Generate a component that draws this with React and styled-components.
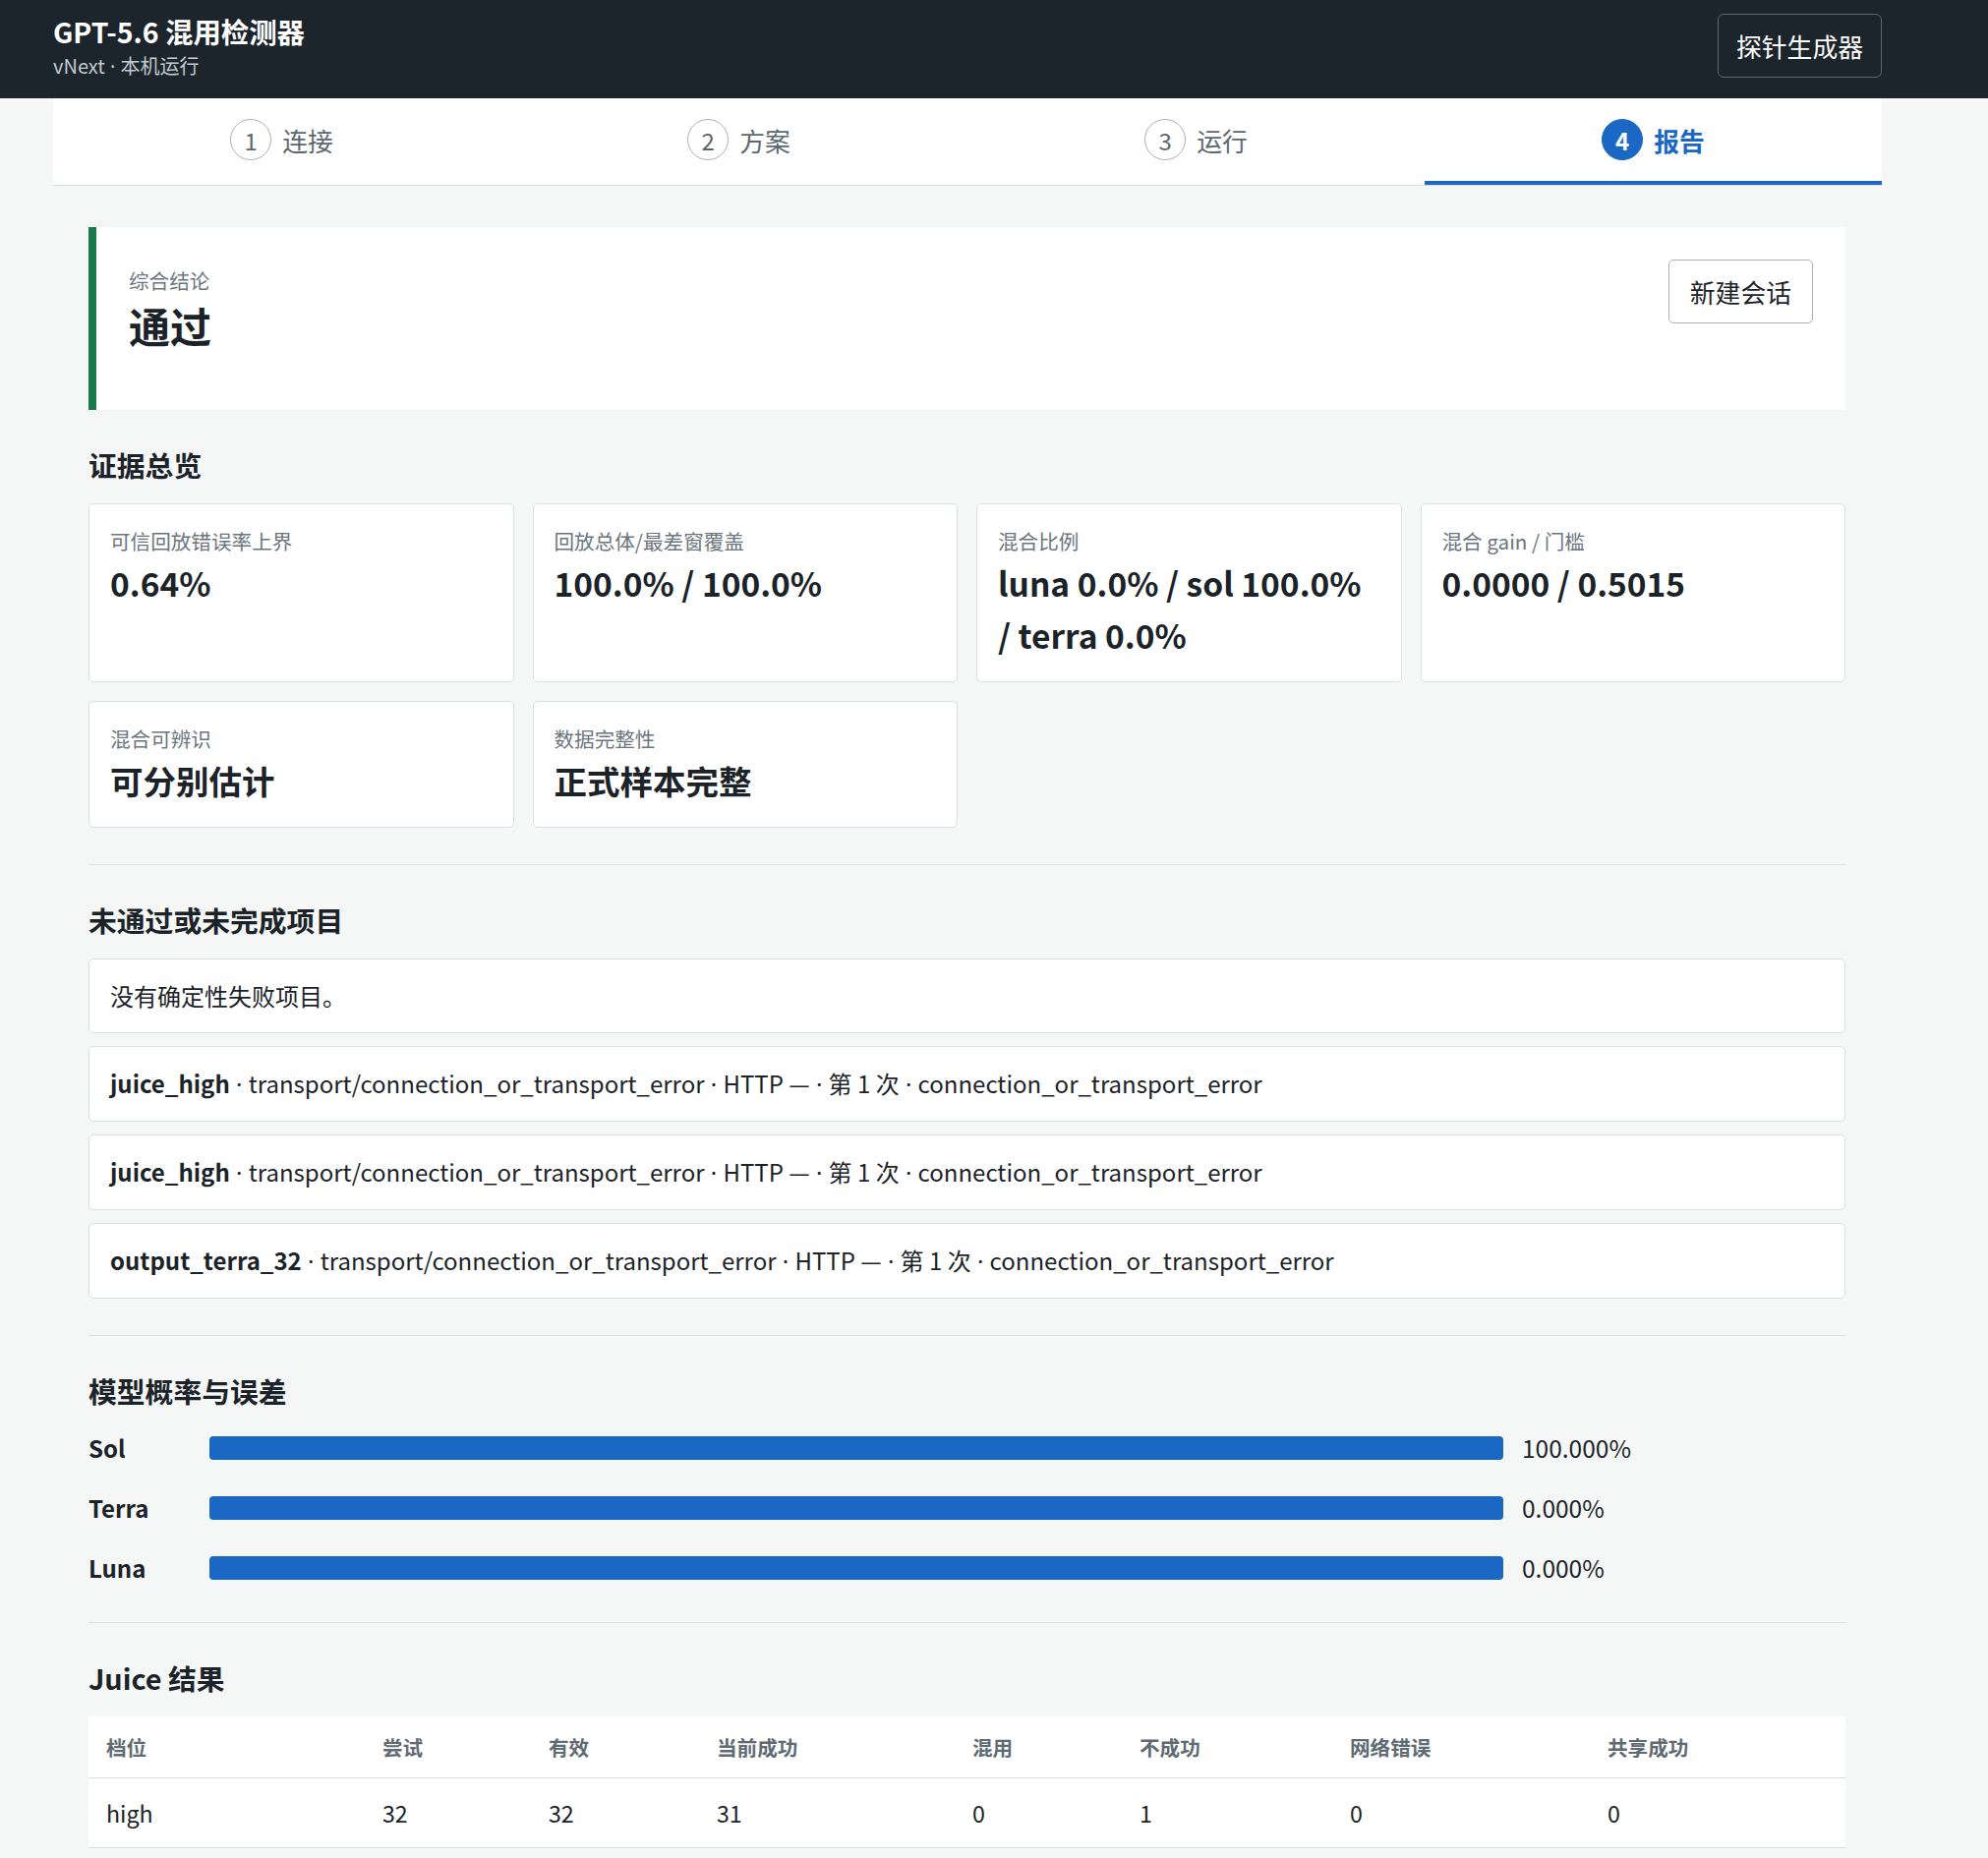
import React from 'react'
import styled, { createGlobalStyle } from 'styled-components'

const GlobalStyle = createGlobalStyle`
  * { box-sizing: border-box; }
  body {
    margin: 0;
    background: #f5f7f7;
    color: #1b2329;
    font-family: "Noto Sans CJK SC", "Noto Sans", sans-serif;
  }
`

const TopBar = styled.header`
  background: #1b252b;
  height: 100px;
`

const TopInner = styled.div`
  width: 1860px;
  margin-left: 54px;
  padding-top: 13px;
  display: flex;
  justify-content: space-between;
  align-items: flex-start;
`

const Brand = styled.div`
  display: flex;
  flex-direction: column;
`

const BrandTitle = styled.div`
  color: #ffffff;
  font-size: 28.4px;
  font-weight: 700;
  line-height: 37px;
`

const BrandSub = styled.div`
  color: #c3cacf;
  font-size: 20px;
  line-height: 34px;
`

const Dot = styled.span`
  font-family: "Noto Sans", sans-serif;
  white-space: pre;
`

const GhostButton = styled.button`
  height: 65px;
  margin-top: 1px;
  padding: 0 18px;
  background: transparent;
  color: #ffffff;
  border: 1px solid #5a656c;
  border-radius: 6px;
  font-family: inherit;
  font-size: 25.8px;
`

const Shell = styled.div`
  width: 1860px;
  margin-left: 54px;
`

const Steps = styled.nav`
  display: grid;
  grid-template-columns: repeat(4, 1fr);
  background: #ffffff;
  border-bottom: 1px solid #d8dde1;
`

const Step = styled.div`
  height: 88px;
  display: flex;
  align-items: center;
  justify-content: center;
  gap: 11px;
  border-bottom: 4px solid ${p => (p.$active ? '#1a68c4' : 'transparent')};
  color: ${p => (p.$active ? '#1a68c4' : '#5c676f')};
  font-size: 25.8px;
  font-weight: ${p => (p.$active ? 700 : 400)};
`

const StepNum = styled.span`
  width: 42px;
  height: 42px;
  border-radius: 50%;
  display: flex;
  align-items: center;
  justify-content: center;
  font-size: 24px;
  border: 1.3px solid ${p => (p.$active ? '#1a68c4' : '#a9b1b7')};
  background: ${p => (p.$active ? '#1a68c4' : '#ffffff')};
  color: ${p => (p.$active ? '#ffffff' : '#5c676f')};
  font-weight: ${p => (p.$active ? 700 : 400)};
`

const Main = styled.main`
  padding: 42px 37px 0 36px;
`

const Verdict = styled.section`
  min-height: 186px;
  background: #ffffff;
  border-left: 8px solid #1b7a4c;
  padding: 33px;
  display: flex;
  justify-content: space-between;
  align-items: flex-start;
`

const VerdictLabel = styled.div`
  margin-top: 6px;
  font-size: 20.6px;
  line-height: 31px;
  color: #6b767e;
`

const VerdictValue = styled.div`
  margin-top: 3px;
  font-size: 42px;
  line-height: 54px;
  font-weight: 700;
`

const OutlineButton = styled.button`
  height: 65px;
  padding: 0 21px;
  background: #ffffff;
  color: #1b2329;
  border: 1px solid #a9b1b6;
  border-radius: 5px;
  font-family: inherit;
  font-size: 25.8px;
`

const Section = styled.section`
  padding: 36px 0 37px;
  border-bottom: ${p => (p.$last ? 'none' : '1px solid #dde1e4')};
`

const Heading = styled.h2`
  margin: 0 0 19px;
  font-size: 28.8px;
  line-height: 40px;
  font-weight: 700;
`

const Metrics = styled.div`
  display: grid;
  grid-template-columns: repeat(4, 1fr);
  gap: 19px;
  align-items: stretch;
`

const Metric = styled.div`
  background: #ffffff;
  border: 1px solid #dadfe3;
  border-radius: 5px;
  padding: 21px;
`

const MetricLabel = styled.div`
  font-size: 20.6px;
  line-height: 32px;
  color: #6b767e;
`

const MetricValue = styled.div`
  font-size: 33.5px;
  line-height: 53px;
  font-weight: 700;
`

const Issues = styled.div`
  display: flex;
  flex-direction: column;
  gap: 13px;
`

const Issue = styled.div`
  background: #ffffff;
  border: 1px solid #dadfe3;
  border-radius: 5px;
  padding: 18px 21px;
  font-size: 24px;
  line-height: 38px;
`

const Bars = styled.div`
  display: grid;
  grid-template-columns: 104px 1fr 329px;
  column-gap: 19px;
  row-gap: 25px;
  align-items: center;
  padding-top: 1px;
`

const BarName = styled.div`
  font-size: 24px;
  line-height: 36px;
  font-weight: 700;
`

const BarTrack = styled.div`
  height: 24px;
  border-radius: 4px;
  background: #1a68c4;
`

const BarValue = styled.div`
  font-size: 24.5px;
  line-height: 36px;
`

const Table = styled.table`
  width: 100%;
  border-collapse: collapse;
  table-layout: fixed;
  background: #ffffff;
`

const Th = styled.th`
  width: ${p => p.$w}px;
  height: 62px;
  padding: 0 18px;
  text-align: left;
  font-size: 20.6px;
  font-weight: 700;
  color: #5f6b73;
  border-bottom: 1px solid #d9dee2;
`

const Td = styled.td`
  height: 71px;
  padding: 0 18px;
  font-size: 23.2px;
  border-bottom: 1px solid #d9dee2;
`

const steps = ['连接', '方案', '运行', '报告']

const metrics = [
  { label: '可信回放错误率上界', value: '0.64%' },
  { label: '回放总体/最差窗覆盖', value: '100.0% / 100.0%' },
  { label: '混合比例', value: 'luna 0.0% / sol 100.0% / terra 0.0%' },
  { label: '混合 gain / 门槛', value: '0.0000 / 0.5015' },
  { label: '混合可辨识', value: '可分别估计' },
  { label: '数据完整性', value: '正式样本完整' },
]

const issues = ['juice_high', 'juice_high', 'output_terra_32']

const probs = [
  { name: 'Sol', value: '100.000%' },
  { name: 'Terra', value: '0.000%' },
  { name: 'Luna', value: '0.000%' },
]

const columns = [
  ['档位', 281],
  ['尝试', 169],
  ['有效', 171],
  ['当前成功', 260],
  ['混用', 170],
  ['不成功', 214],
  ['网络错误', 262],
  ['共享成功', 260],
]

const juiceRow = ['high', '32', '32', '31', '0', '1', '0', '0']

export default function App() {
  return (
    <>
      <GlobalStyle />
      <TopBar>
        <TopInner>
          <Brand>
            <BrandTitle>GPT-5.6 混用检测器</BrandTitle>
            <BrandSub>
              vNext<Dot> · </Dot>本机运行
            </BrandSub>
          </Brand>
          <GhostButton>探针生成器</GhostButton>
        </TopInner>
      </TopBar>
      <Shell>
        <Steps>
          {steps.map((s, i) => (
            <Step key={s} $active={i === 3}>
              <StepNum $active={i === 3}>{i + 1}</StepNum>
              {s}
            </Step>
          ))}
        </Steps>
        <Main>
          <Verdict>
            <div>
              <VerdictLabel>综合结论</VerdictLabel>
              <VerdictValue>通过</VerdictValue>
            </div>
            <OutlineButton>新建会话</OutlineButton>
          </Verdict>

          <Section>
            <Heading>证据总览</Heading>
            <Metrics>
              {metrics.map(m => (
                <Metric key={m.label}>
                  <MetricLabel>{m.label}</MetricLabel>
                  <MetricValue>{m.value}</MetricValue>
                </Metric>
              ))}
            </Metrics>
          </Section>

          <Section>
            <Heading>未通过或未完成项目</Heading>
            <Issues>
              <Issue>没有确定性失败项目。</Issue>
              {issues.map((name, i) => (
                <Issue key={i}>
                  <b>{name}</b>
                  <Dot> · </Dot>transport/connection_or_transport_error
                  <Dot> · </Dot>HTTP —<Dot> · </Dot>第 1 次
                  <Dot> · </Dot>connection_or_transport_error
                </Issue>
              ))}
            </Issues>
          </Section>

          <Section>
            <Heading>模型概率与误差</Heading>
            <Bars>
              {probs.map(p => (
                <React.Fragment key={p.name}>
                  <BarName>{p.name}</BarName>
                  <BarTrack />
                  <BarValue>{p.value}</BarValue>
                </React.Fragment>
              ))}
            </Bars>
          </Section>

          <Section $last>
            <Heading>Juice 结果</Heading>
            <Table>
              <thead>
                <tr>
                  {columns.map(([c, w]) => (
                    <Th key={c} $w={w}>{c}</Th>
                  ))}
                </tr>
              </thead>
              <tbody>
                <tr>
                  {juiceRow.map((v, i) => (
                    <Td key={i}>{v}</Td>
                  ))}
                </tr>
              </tbody>
            </Table>
          </Section>
        </Main>
      </Shell>
    </>
  )
}
